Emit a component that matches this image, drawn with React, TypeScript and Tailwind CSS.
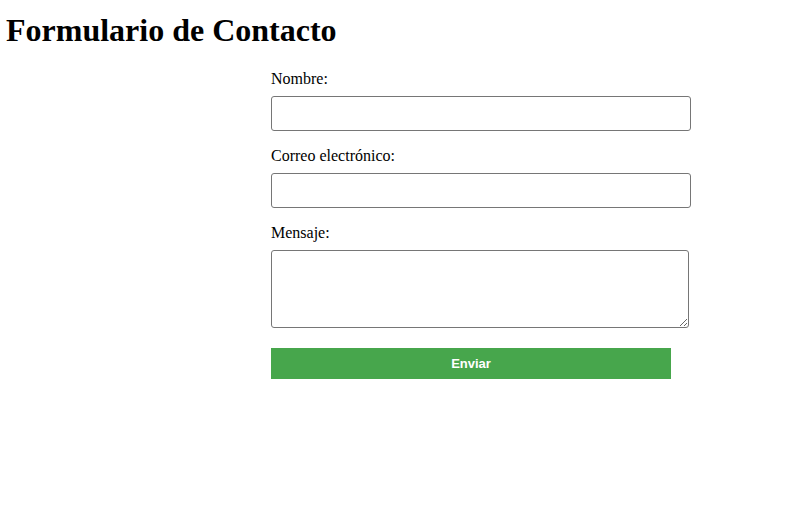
export default function App() {
  return (
    <div className="min-h-screen bg-white text-black font-['Liberation_Serif',serif]">
      <h1 className="pl-[6px] pt-[12px] text-[32px] leading-[37px] font-bold">
        Formulario de Contacto
      </h1>
      <form
        className="ml-[271px] mt-[21px] w-[400px] flex flex-col"
        onSubmit={(e) => e.preventDefault()}
      >
        <label className="text-[16px] leading-[18px] mb-[8px]">Nombre:</label>
        <input
          type="text"
          className="w-[420px] h-[35px] px-[10px] border border-[#767676] rounded-[3px] bg-white"
        />
        <label className="text-[16px] leading-[18px] mt-[16px] mb-[8px]">
          Correo electrónico:
        </label>
        <input
          type="email"
          className="w-[420px] h-[35px] px-[10px] border border-[#767676] rounded-[3px] bg-white"
        />
        <label className="text-[16px] leading-[18px] mt-[16px] mb-[8px]">Mensaje:</label>
        <textarea className="w-[418px] h-[78px] px-[10px] border border-[#767676] rounded-[3px] bg-white resize" />
        <button
          type="submit"
          className="mt-[20px] w-[400px] h-[31px] bg-[#47a64c] text-white text-[13px] font-bold font-['Liberation_Sans',Arial,sans-serif]"
        >
          Enviar
        </button>
      </form>
    </div>
  );
}
